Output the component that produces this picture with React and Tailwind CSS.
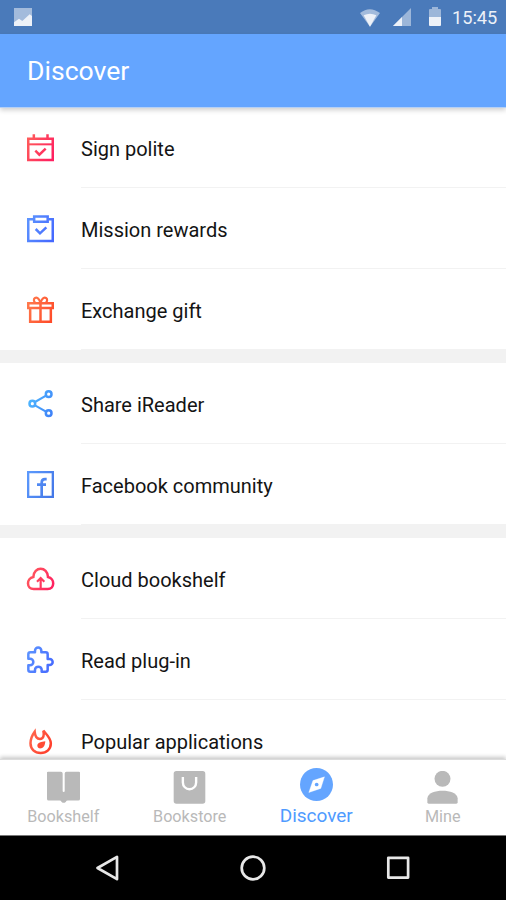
import clsx from 'clsx';

function Gradient({ id, from, to }) {
  return (
    <linearGradient id={id} gradientUnits="userSpaceOnUse" x1="0" y1="20" x2="81" y2="61">
      <stop stopColor={from} />
      <stop offset="1" stopColor={to} />
    </linearGradient>
  );
}

function RowIcon({ id, from, to, children }) {
  return (
    <svg
      className="h-[27px] w-[27px] shrink-0 overflow-visible"
      viewBox="0 0 81 81"
      fill="none"
      stroke={`url(#${id})`}
      strokeWidth="7.5"
    >
      <defs>
        <Gradient id={id} from={from} to={to} />
      </defs>
      {children}
    </svg>
  );
}

const groups = [
  [
    {
      id: 'sign',
      label: 'Sign polite',
      from: '#ff5a5a',
      to: '#ff2060',
      icon: (
        <>
          <path d="M3.750 14.500H77.250V78.250H3.750Z" />
          <path d="M3.750 31H77.250" strokeWidth="6" />
          <path d="M20.500 1V13M61.500 1V13" />
          <path d="M25 50L37 62L56 44" />
        </>
      ),
    },
    {
      id: 'mission',
      label: 'Mission rewards',
      from: '#5c93ff',
      to: '#4569ff',
      icon: (
        <>
          <path d="M18 12.500H3.750V78H77.250V12.500H64" />
          <path d="M21.500 4.500H62V20H21.500Z" />
          <path d="M26 42L39 55L58 37" />
        </>
      ),
    },
    {
      id: 'gift',
      label: 'Exchange gift',
      from: '#ff7a4d',
      to: '#ff4a28',
      icon: (
        <>
          <path d="M3.750 21.500H77.250V36H3.750Z" />
          <path d="M9.500 36V77.250H71.500V36M40.500 20V77" />
          <path d="M40 19C35 6 29 3 24 6C19 9 20 15 24 20M41 19C46 6 52 3 57 6C62 9 61 15 57 20" strokeWidth="6.5" />
        </>
      ),
    },
  ],
  [
    {
      id: 'share',
      label: 'Share iReader',
      from: '#4fbcff',
      to: '#3f82f8',
      icon: (
        <>
          <circle cx="16" cy="41" r="8.500" />
          <circle cx="65" cy="12.500" r="8.500" />
          <circle cx="65" cy="69.500" r="8.500" />
          <path d="M24 36L57 17M24 46L57 65" strokeWidth="6.5" />
        </>
      ),
    },
    {
      id: 'facebook',
      label: 'Facebook community',
      from: '#5b98fc',
      to: '#4478e8',
      icon: (
        <>
          <path d="M3.500 3.500H77.500V77.500H3.500Z" strokeWidth="7" />
          <path d="M59 24.500H54Q44 24.500 44 35V78M30 41H57" strokeWidth="8" />
        </>
      ),
    },
  ],
  [
    {
      id: 'cloud',
      label: 'Cloud bookshelf',
      from: '#ff5c5c',
      to: '#ff2060',
      icon: (
        <>
          <path d="M20 72C-2 72 -3 40 19 36C20 3 62 3 63 36C84 40 84 72 62 72Z" />
          <path d="M41 72V39M30 50L41 39L52 50" strokeWidth="6.5" />
        </>
      ),
    },
    {
      id: 'plugin',
      label: 'Read plug-in',
      from: '#5c93ff',
      to: '#4569ff',
      icon: (
        <path
          strokeLinejoin="round"
          d="M4 25Q4 19 10 19H24V14A9.500 9.500 0 0 1 43 14V19H56Q62 19 62 25V39H68A9 9 0 0 1 68 57H62V71Q62 77 56 77H44V71A10 9 0 0 0 24 71V77H10Q4 77 4 71V58H9A10 10 0 0 0 9 38H4Z"
        />
      ),
    },
    {
      id: 'popular',
      label: 'Popular applications',
      from: '#ff6a50',
      to: '#ff3a28',
      icon: (
        <>
          <path d="M23 14C15 25 10.500 36 10.500 49C10.500 66 23 78 41 78C59 78 71.500 66 71.500 49C71.500 33 60 24 49 11C52 24 50 36 39 36C28 36 24 27 23 14Z" />
          <path
            d="M55 43C43 44 31 47 31 56C31 61 36 65 42 64C51 62 54 54 55 43Z"
            fill="#ff4b35"
            stroke="none"
          />
        </>
      ),
    },
  ],
];

const tabs = [
  {
    label: 'Bookshelf',
    icon: (
      <path d="M0 4Q0 2 3 2H41Q46 2 46 7V59Q46 62 49 62Q52 62 52 59V7Q52 2 57 2H94Q97 2 97 5V82Q97 87 92 87H61Q57 87 55 91Q49 96 43 91Q41 87 37 87H5Q0 87 0 82Z" />
    ),
  },
  {
    label: 'Bookstore',
    icon: (
      <>
        <rect x="2" y="0" width="93" height="96" rx="8" />
        <path
          d="M29 18V34A19.500 19.500 0 0 0 68 34V18"
          fill="none"
          stroke="white"
          strokeWidth="7"
        />
      </>
    ),
  },
  {
    label: 'Discover',
    active: true,
    icon: (
      <>
        <circle cx="48.500" cy="48.500" r="48.500" />
        <path
          d="M72 26L61 60L26 72L38 37Z"
          fill="white"
          stroke="white"
          strokeWidth="1"
          strokeLinejoin="round"
        />
        <circle cx="49" cy="48.500" r="5.500" />
      </>
    ),
  },
  {
    label: 'Mine',
    icon: (
      <>
        <circle cx="48.500" cy="23" r="23.500" />
        <path d="M4 80C5 65 27 58 48.500 58C70 58 92 65 93 80V92Q93 96 89 96H8Q4 96 4 92Z" />
      </>
    ),
  },
];

function StatusBar() {
  return (
    <div className="flex h-[34px] shrink-0 items-center bg-[#4a7aba] pl-[14px] pr-2 text-[#edf1f8]">
      <svg className="h-[18px] w-[18px]" viewBox="0 0 54 54" fill="currentColor">
        <rect width="54" height="54" opacity=".55" />
        <path d="M0 43L15 32L25 39L47 19L54 24V54H0Z" />
      </svg>
      <svg className="ml-auto h-[19px] w-5" viewBox="0 0 60 57" fill="currentColor">
        <path d="M0 15Q29 -8 60 15L30 56Z" opacity=".55" />
        <path d="M11 22Q30 12 49 22L30 56Z" />
      </svg>
      <svg className="ml-[13px] h-[18px] w-[18px]" viewBox="0 0 54 54" fill="currentColor">
        <path d="M54 0V54H0Z" opacity=".5" />
        <path d="M27 27V54H0Z" />
      </svg>
      <svg className="-mt-px ml-[18px] h-[19px] w-3" viewBox="0 0 36 57" fill="currentColor">
        <path d="M9 0H27V6H33Q36 6 36 9V31H0V9Q0 6 3 6H9Z" opacity=".5" />
        <path d="M0 30H36V54Q36 57 33 57H3Q0 57 0 54Z" />
      </svg>
      <span className="ml-[11px] mt-[3px] w-[46px] whitespace-nowrap text-[18.200px] leading-none">15:45</span>
    </div>
  );
}

function Row({ item }) {
  return (
    <li className="flex h-[81px] bg-white pl-[27px]">
      <div className="flex w-[54px] shrink-0 items-center">
        <RowIcon id={item.id} from={item.from} to={item.to}>
          {item.icon}
        </RowIcon>
      </div>
      <div className="flex flex-1 items-center border-b border-[#f2f2f2] pt-1">
        <span className="whitespace-nowrap text-xl leading-6 text-[#141414]">{item.label}</span>
      </div>
    </li>
  );
}

function TabBar() {
  return (
    <nav className="relative grid h-[76px] shrink-0 grid-cols-4 border-t border-[#dcdcdc] bg-white shadow-[0_-2px_4px_rgba(0,0,0,0.22)]">
      {tabs.map((tab) => (
        <button
          key={tab.label}
          type="button"
          className={clsx(
            'flex flex-col items-center',
            tab.active ? 'pt-2 text-[#64a5ff]' : 'pt-[11px] text-[#b9b9b9]'
          )}
        >
          <svg className="h-[33px] w-[33px]" viewBox="0 0 97 97" fill="currentColor">
            {tab.icon}
          </svg>
          <span
            className={clsx(
              'whitespace-nowrap',
              tab.active ? 'mt-[3px] text-[19px] leading-6 text-[#4f9bff]' : 'mt-[3px] text-[16.2px] leading-5'
            )}
          >
            {tab.label}
          </span>
        </button>
      ))}
    </nav>
  );
}

function SystemNav() {
  return (
    <div className="relative flex h-[65px] shrink-0 items-center justify-center gap-[119px] border-t border-[#777] bg-black">
      <svg className="h-[26px] w-[26px]" viewBox="0 0 26 26" fill="none" stroke="#e8e8e8" strokeWidth="2.700" strokeLinejoin="round">
        <path d="M2.500 13L22 1.800V24.200Z" />
      </svg>
      <svg className="h-[26px] w-[26px]" viewBox="0 0 26 26" fill="none" stroke="#e8e8e8" strokeWidth="2.700">
        <circle cx="13" cy="13" r="11.300" />
      </svg>
      <svg className="h-[26px] w-[26px]" viewBox="0 0 26 26" fill="none" stroke="#e8e8e8" strokeWidth="2.700" strokeLinejoin="round">
        <rect x="3.300" y="2.800" width="19.800" height="19.800" />
      </svg>
    </div>
  );
}

export default function App() {
  return (
    <div className="flex h-[900px] w-[506px] flex-col overflow-hidden bg-white font-['Roboto',sans-serif]">
      <StatusBar />
      <header className="relative flex h-[73px] shrink-0 items-center bg-[#64a5ff] pl-[27px] shadow-[0_1px_0_#b5d0f5,0_3px_5px_rgba(0,0,0,0.2)]">
        <h1 className="text-[26.600px] leading-8 text-white">Discover</h1>
      </header>
      <main className="flex min-h-0 flex-1 flex-col gap-[13px] overflow-hidden bg-[#f2f2f2]">
        {groups.map((items) => (
          <ul key={items[0].id} className="shrink-0">
            {items.map((item) => (
              <Row key={item.id} item={item} />
            ))}
          </ul>
        ))}
      </main>
      <TabBar />
      <SystemNav />
    </div>
  );
}
